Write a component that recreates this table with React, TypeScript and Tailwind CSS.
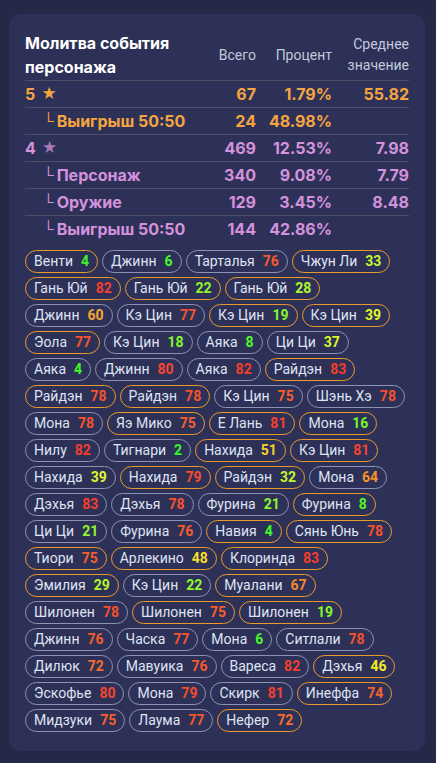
import React from "react";

type Pull = [string, number, boolean];

// one inner array per line of chips, as laid out in the tracker
const pullRows: Pull[][] = [
  [["Венти", 4, true], ["Джинн", 6, false], ["Тарталья", 76, false], ["Чжун Ли", 33, true]],
  [["Гань Юй", 82, true], ["Гань Юй", 22, true], ["Гань Юй", 28, true]],
  [["Джинн", 60, false], ["Кэ Цин", 77, false], ["Кэ Цин", 19, true], ["Кэ Цин", 39, true]],
  [["Эола", 77, true], ["Кэ Цин", 18, false], ["Аяка", 8, false], ["Ци Ци", 37, false]],
  [["Аяка", 4, false], ["Джинн", 80, false], ["Аяка", 82, false], ["Райдэн", 83, true]],
  [["Райдэн", 78, true], ["Райдэн", 78, true], ["Кэ Цин", 75, false], ["Шэнь Хэ", 78, false]],
  [["Мона", 78, false], ["Яэ Мико", 75, true], ["Е Лань", 81, true], ["Мона", 16, true]],
  [["Нилу", 82, false], ["Тигнари", 2, false], ["Нахида", 51, true], ["Кэ Цин", 81, true]],
  [["Нахида", 39, false], ["Нахида", 79, true], ["Райдэн", 32, true], ["Мона", 64, false]],
  [["Дэхья", 83, false], ["Дэхья", 78, false], ["Фурина", 21, false], ["Фурина", 8, true]],
  [["Ци Ци", 21, false], ["Фурина", 76, false], ["Навия", 4, true], ["Сянь Юнь", 78, true]],
  [["Тиори", 75, true], ["Арлекино", 48, true], ["Клоринда", 83, true]],
  [["Эмилия", 29, true], ["Кэ Цин", 22, false], ["Муалани", 67, true]],
  [["Шилонен", 78, false], ["Шилонен", 75, true], ["Шилонен", 19, true]],
  [["Джинн", 76, false], ["Часка", 77, false], ["Мона", 6, false], ["Ситлали", 78, false]],
  [["Дилюк", 72, false], ["Мавуика", 76, false], ["Вареса", 82, false], ["Дэхья", 46, true]],
  [["Эскофье", 80, false], ["Мона", 79, false], ["Скирк", 81, false], ["Инеффа", 74, true]],
  [["Мидзуки", 75, false], ["Лаума", 77, false], ["Нефер", 72, true]],
];

const pityColor = (n: number) => {
  const hue = Math.max(5, 120 - n * 1.4);
  return `hsl(${hue}, 92%, 57%)`;
};

interface RowNode {
  label: React.ReactNode;
  total: string;
  percent: string;
  avg?: string;
  color: string;
  sub?: boolean;
}

const StatRow: React.FC<RowNode> = ({ label, total, percent, avg, color, sub }) => {
  return (
    <div
      className={`grid grid-cols-[1fr_60px_76px_77px] h-[27px] items-center border-t border-[#4a5068] text-[16px] font-bold ${color}`}
    >
      <div className={sub ? "pl-[18px] flex items-center" : "flex items-center"}>
        {sub && <span className="mr-[3px] font-normal text-[15px]">└</span>}
        {label}
      </div>
      <div className="text-right">{total}</div>
      <div className="text-right">{percent}</div>
      <div className="text-right">{avg}</div>
    </div>
  );
};

const App: React.FC = () => {
  return (
    <div
      className="min-h-[763px] w-full bg-[#262848] pt-[14px] pb-[12px] pl-[9px] pr-[11px]"
      style={{ fontFamily: "Inter, 'Noto Sans', sans-serif" }}
    >
      <div className="Card rounded-xl bg-[#2d3157] px-4 pt-[17px] pb-[19px]">
        <div className="Header grid grid-cols-[1fr_60px_76px_77px] items-center pb-[1px]">
          <div className="text-[16px] font-bold leading-[24px] text-white">
            Молитва события
            <br />
            персонажа
          </div>
          <div className="text-right font-[Roboto] text-[14px] text-[#c3c8dc]">Всего</div>
          <div className="text-right font-[Roboto] text-[14px] text-[#c3c8dc]">Процент</div>
          <div className="text-right font-[Roboto] text-[14px] leading-[21px] text-[#c3c8dc]">
            Среднее
            <br />
            значение
          </div>
        </div>

        <StatRow
          label={
            <>
              5 <span className="ml-[6px] text-[15px]">★</span>
            </>
          }
          total="67"
          percent="1.79%"
          avg="55.82"
          color="text-[#f5a442]"
        />
        <StatRow label="Выигрыш 50:50" total="24" percent="48.98%" color="text-[#f5a442]" sub />
        <StatRow
          label={
            <>
              4 <span className="ml-[6px] text-[15px] text-[#a979b8]">★</span>
            </>
          }
          total="469"
          percent="12.53%"
          avg="7.98"
          color="text-[#d492dc]"
        />
        <StatRow label="Персонаж" total="340" percent="9.08%" avg="7.79" color="text-[#d492dc]" sub />
        <StatRow label="Оружие" total="129" percent="3.45%" avg="8.48" color="text-[#d492dc]" sub />
        <StatRow label="Выигрыш 50:50" total="144" percent="42.86%" color="text-[#d492dc]" sub />

        <div className="Pulls mt-[8px] flex flex-col gap-[4px] font-[Roboto]">
          {pullRows.map((row, r) => (
            <div key={r} className="flex gap-[4px]">
              {row.map(([name, n, won], i) => (
                <div
                  key={i}
                  className={`flex h-[23px] shrink-0 items-center whitespace-nowrap rounded-full border px-[8px] text-[14px] ${
                    won ? "border-[#e99a2c]" : "border-[#8d93b3]"
                  }`}
                >
                  <span className="text-[#dfe3f3]">{name}</span>
                  <span className="ml-[8px] font-bold" style={{ color: pityColor(n) }}>
                    {n}
                  </span>
                </div>
              ))}
            </div>
          ))}
        </div>
      </div>
    </div>
  );
};

export default App;
